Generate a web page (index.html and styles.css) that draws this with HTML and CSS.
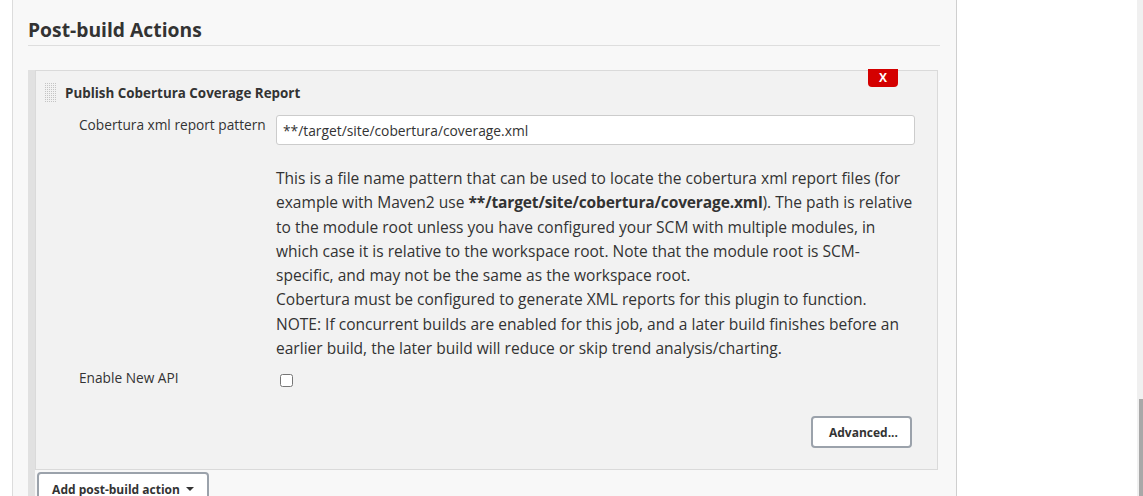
FILE: index.html
```html
<!DOCTYPE html>
<html>
<head>
<meta charset="utf-8">
<link rel="stylesheet" href="styles.css">
</head>
<body>
<div class="page">
  <div class="gutter"></div>
  <div class="panel">
    <h2 class="section-title">Post-build Actions</h2>
    <div class="repeated">
      <div class="chunk">
        <button class="delete" type="button">X</button>
        <div class="chunk-head">
          <span class="handle"></span>
          <span class="chunk-title">Publish Cobertura Coverage Report</span>
        </div>
        <div class="row">
          <label class="label">Cobertura xml report pattern</label>
          <div class="field">
            <input class="text-input" type="text" value="**/target/site/cobertura/coverage.xml">
          </div>
        </div>
        <div class="row">
          <div class="label"></div>
          <div class="help">This is a file name pattern that can be used to locate the cobertura xml report files (for example with Maven2 use <b>**/target/site/cobertura/coverage.xml</b>). The path is relative to the module root unless you have configured your SCM with multiple modules, in which case it is relative to the workspace root. Note that the module root is SCM-specific, and may not be the same as the workspace root.<br>Cobertura must be configured to generate XML reports for this plugin to function.<br>NOTE: If concurrent builds are enabled for this job, and a later build finishes before an earlier build, the later build will reduce or skip trend analysis/charting.</div>
        </div>
        <div class="row row-check">
          <label class="label">Enable New API</label>
          <div class="field"><input class="check" type="checkbox"></div>
        </div>
        <div class="actions">
          <button class="btn" type="button">Advanced...</button>
        </div>
      </div>
      <div class="add-wrap">
        <button class="btn btn-add" type="button">Add post-build action <span class="caret"></span></button>
      </div>
    </div>
  </div>
  <div class="side"></div>
  <div class="scrollbar"><div class="thumb"></div></div>
</div>
</body>
</html>
```

FILE: styles.css
```css
* { box-sizing: border-box; }
html, body {
  margin: 0;
  padding: 0;
  height: 496px;
  overflow: hidden;
  background: #fff;
}
body {
  font-family: "Open Sans", "Noto Sans", sans-serif;
  color: #333;
}
.page {
  display: flex;
  height: 496px;
}
.gutter {
  width: 13px;
  flex: none;
  border-right: 1px solid #dcdcdc;
  background: #fff;
}
.panel {
  width: 944px;
  flex: none;
  background: #f8f8f8;
  border-right: 1px solid #cfcfcf;
  padding: 0 16px 0 15px;
}
.side {
  flex: 1;
  background: #fff;
}
.scrollbar {
  width: 6px;
  flex: none;
  background: #f0f0f0;
  display: flex;
  flex-direction: column;
  align-items: flex-end;
  padding-top: 399px;
}
.thumb {
  width: 4px;
  flex: 1;
  background: #a8a8a8;
}
.section-title {
  margin: 0;
  font-size: 19.3px;
  font-weight: 700;
  line-height: 26px;
  padding-top: 17px;
  padding-bottom: 2px;
  border-bottom: 1px solid #dedede;
  color: #333;
}
.repeated {
  margin-top: 24px;
  margin-right: 2px;
  border-left: 7px solid #e1e1e1;
}
.chunk {
  position: relative;
  background: #f2f2f2;
  border: 1px solid #dadada;
  padding: 12px 22px 21px 9px;
}
.delete {
  position: absolute;
  top: -2px;
  right: 39px;
  width: 30px;
  height: 18px;
  border: none;
  border-radius: 0 0 4px 4px;
  background: #d40000;
  color: #fff;
  font-family: "Open Sans", sans-serif;
  font-weight: 700;
  font-size: 12px;
  line-height: 18px;
  padding: 0;
}
.chunk-head {
  display: flex;
  align-items: center;
  height: 20px;
  gap: 8px;
}
.handle {
  width: 12px;
  height: 20px;
  flex: none;
  background-color: #c4c4c4;
  background-image: linear-gradient(90deg, transparent 50%, #f2f2f2 50%), linear-gradient(transparent 50%, #f2f2f2 50%);
  background-size: 2px 2px;
}
.chunk-title {
  font-weight: 700;
  font-size: 13.4px;
  line-height: 20px;
}
.row {
  display: grid;
  grid-template-columns: 197px 1fr;
  padding-left: 34px;
}
.chunk-head + .row { margin-top: 12px; }
.label {
  font-size: 13.7px;
  line-height: 20px;
}
.text-input {
  width: 100%;
  height: 30px;
  border: 1px solid #cccccc;
  border-radius: 3px;
  background: #fff;
  font-family: "Open Sans", sans-serif;
  font-size: 13.8px;
  color: #333;
  padding: 0 6px;
}
.help {
  margin-top: 21px;
  font-size: 15.55px;
  line-height: 24.3px;
}
.help b {
  font-weight: 700;
  letter-spacing: -0.15px;
}
.row-check { margin-top: 8px; }
.check {
  width: 13px;
  height: 13px;
  margin: 6px 0 0 4px;
}
.actions {
  display: flex;
  justify-content: flex-end;
  margin-top: 24px;
  padding-right: 3px;
}
.btn {
  background: #fff;
  border: 2px solid #9ba2ab;
  border-radius: 4px;
  font-family: "Open Sans", sans-serif;
  font-weight: 700;
  font-size: 12px;
  color: #333;
  height: 32px;
  padding: 0 16px;
}
.actions .btn { width: 101px; }
.add-wrap {
  padding: 2px 0 0 2px;
}
.btn-add {
  width: 172px;
  height: 34px;
  padding: 0;
  display: flex;
  align-items: center;
  justify-content: center;
  gap: 6px;
}
.caret {
  width: 0;
  height: 0;
  border-left: 4px solid transparent;
  border-right: 4px solid transparent;
  border-top: 4px solid #333;
}
```
